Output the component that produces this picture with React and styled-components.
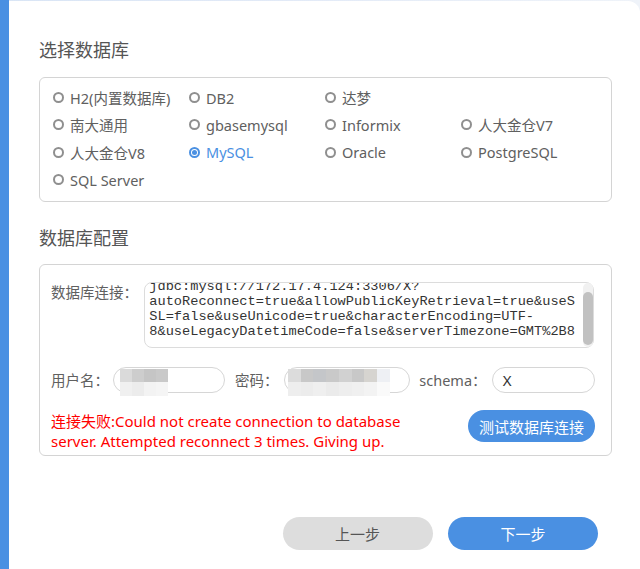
import React, { useEffect, useRef } from 'react';
import styled, { createGlobalStyle } from 'styled-components';

const GlobalStyle = createGlobalStyle`
  html, body { margin: 0; padding: 0; height: 100%; }
  body {
    background: linear-gradient(90deg, #d9e5f5 0%, #e2eaf7 45%, #eff3f9 100%);
    font-family: "Noto Sans", "Noto Sans CJK SC", sans-serif;
    overflow: hidden;
  }
  #root { height: 100%; }
`;

const Page = styled.div`
  display: flex;
  height: 100%;
`;

const SideBar = styled.div`
  width: 9px;
  flex: none;
  background: #4a90e2;
`;

const Card = styled.div`
  flex: 1;
  margin-top: 1px;
  background: #fff;
  border-top-right-radius: 12px;
  padding: 37px 28px 0 30px;
  box-sizing: border-box;
`;

const SectionTitle = styled.h2`
  margin: ${p => p.$top || 0}px 0 ${p => p.$bottom || 15}px;
  font-size: 18px;
  line-height: 24px;
  font-weight: 400;
  color: #555;
`;

const Panel = styled.div`
  border: 1px solid #d4d4d4;
  border-radius: 6px;
  box-sizing: border-box;
`;

const DbGrid = styled(Panel)`
  height: 125px;
  padding: 6px 0 0 13px;
  display: grid;
  grid-template-columns: repeat(4, 136px);
  grid-auto-rows: 27.33px;
  align-content: start;
`;

const Radio = styled.label`
  display: flex;
  align-items: center;
  gap: 6px;
  font-size: 14.5px;
  color: ${p => (p.$on ? '#4a90e2' : '#606060')};
  white-space: nowrap;
  cursor: pointer;
`;

const Dot = styled.span`
  width: 11px;
  height: 11px;
  flex: none;
  box-sizing: border-box;
  border-radius: 50%;
  border: 2px solid ${p => (p.$on ? '#4a90e2' : '#8f8f8f')};
  display: flex;
  align-items: center;
  justify-content: center;
  &::after {
    content: '';
    width: 5px;
    height: 5px;
    border-radius: 50%;
    background: ${p => (p.$on ? '#4a90e2' : 'transparent')};
  }
`;

const ConfigPanel = styled(Panel)`
  height: 192px;
  padding: 17px 16px 0 11px;
  display: flex;
  flex-direction: column;
`;

const Row = styled.div`
  display: flex;
  align-items: ${p => p.$align || 'center'};
  margin-top: ${p => p.$mt || 0}px;
`;

const Label = styled.span`
  width: ${p => p.$w}px;
  margin-left: ${p => p.$ml || 0}px;
  flex: none;
  font-size: 14.5px;
  line-height: 20px;
  color: #606060;
  white-space: nowrap;
`;

const UrlWrap = styled.div`
  position: relative;
  flex: 1;
  height: 66px;
  margin-right: 1px;
`;

const UrlBox = styled.textarea`
  display: block;
  width: 100%;
  height: 100%;
  margin: 0;
  box-sizing: border-box;
  padding: 8px 14px 8px 4px;
  border: 1px solid #dcdcdc;
  border-radius: 8px;
  font-family: "Liberation Mono", monospace;
  font-size: 13.65px;
  line-height: 15px;
  color: #333;
  resize: none;
  outline: none;
  overflow-y: hidden;
  scrollbar-width: none;
`;

const ScrollTrack = styled.div`
  position: absolute;
  top: 1px;
  bottom: 1px;
  right: 1px;
  width: 10px;
  border-radius: 5px;
  background: #f1f1f1;
  pointer-events: none;
`;

const ScrollThumb = styled.div`
  margin-top: 9px;
  height: 53px;
  border-radius: 5px;
  background: #c1c1c1;
`;

const Field = styled.div`
  width: ${p => p.$w}px;
  height: 26px;
  flex: none;
  box-sizing: border-box;
  border: 1px solid #d6d6d6;
  border-radius: 13px;
  padding-left: ${p => p.$pl || 10}px;
  display: flex;
  align-items: center;
  font-size: 15px;
  color: #333;
`;

const Mosaic = styled.div`
  align-self: flex-start;
  margin-top: 1px;
  display: grid;
  grid-template-columns: repeat(${p => p.$cols}, ${p => p.$cell}px);
  grid-template-rows: 13px 14px;
`;

const Cell = styled.span`
  background: ${p => p.$c};
`;

const ErrorText = styled.p`
  margin: 1px 0 0;
  width: 380px;
  font-size: 15px;
  line-height: 20px;
  color: #f00;
`;

const PillButton = styled.button`
  width: ${p => p.$w}px;
  height: ${p => p.$h}px;
  margin-left: ${p => (p.$push ? 'auto' : '0')};
  flex: none;
  border: none;
  border-radius: 999px;
  padding: 0;
  background: ${p => (p.$primary ? '#4a90e2' : '#dddddd')};
  color: ${p => (p.$primary ? '#fff' : '#555')};
  font-family: inherit;
  font-size: 15px;
  cursor: pointer;
`;

const Footer = styled.div`
  display: flex;
  justify-content: flex-end;
  gap: 15.5px;
  margin-top: 61px;
  padding-right: 14px;
`;

const databases = [
  'H2(内置数据库)', 'DB2', '达梦', null,
  '南大通用', 'gbasemysql', 'Informix', '人大金仓V7',
  '人大金仓V8', 'MySQL', 'Oracle', 'PostgreSQL',
  'SQL Server',
];

const jdbcUrl =
  'jdbc:mysql://172.17.4.124:3306/X?autoReconnect=true&allowPublicKeyRetrieval=true&useSSL=false&useUnicode=true&characterEncoding=UTF-8&useLegacyDatetimeCode=false&serverTimezone=GMT%2B8';

const userMosaic = {
  top: ['#dadada', '#cdcdcd', '#c5c5c5', '#c9c9c9'],
  bottom: ['#f0f0f0', '#ececec', '#f3f3f3', '#f5f5f5'],
};

const passMosaic = {
  top: ['#dcdcdc', '#c8c8c8', '#c4c6c9', '#c9c9c9', '#d1d1d1', '#c8c8c8', '#d6d4d0', '#eef0f4'],
  bottom: ['#eeeeee', '#ececec', '#efefef', '#ebebeb', '#eeeeee', '#f0f0f0', '#f3f3f3', '#fafafa'],
};

function Redacted({ data, cell }) {
  return (
    <Mosaic $cols={data.top.length} $cell={cell}>
      {data.top.map((c, i) => <Cell key={'t' + i} $c={c} />)}
      {data.bottom.map((c, i) => <Cell key={'b' + i} $c={c} />)}
    </Mosaic>
  );
}

export default function App() {
  const urlRef = useRef(null);

  useEffect(() => {
    if (urlRef.current) urlRef.current.scrollTop = urlRef.current.scrollHeight;
  }, []);

  return (
    <>
      <GlobalStyle />
      <Page>
        <SideBar />
        <Card>
          <SectionTitle>选择数据库</SectionTitle>
          <DbGrid>
            {databases.map((name, i) =>
              name ? (
                <Radio key={name} $on={name === 'MySQL'}>
                  <Dot $on={name === 'MySQL'} />
                  {name}
                </Radio>
              ) : (
                <span key={'empty' + i} />
              )
            )}
          </DbGrid>

          <SectionTitle $top={24} $bottom={14}>数据库配置</SectionTitle>
          <ConfigPanel>
            <Row $align="flex-start">
              <Label $w={93.3}>数据库连接：</Label>
              <UrlWrap>
                <UrlBox ref={urlRef} readOnly value={jdbcUrl} />
                <ScrollTrack>
                  <ScrollThumb />
                </ScrollTrack>
              </UrlWrap>
            </Row>
            <Row $mt={19}>
              <Label $w={62.3}>用户名：</Label>
              <Field $w={112} $pl={6}>
                <Redacted data={userMosaic} cell={12} />
              </Field>
              <Label $w={49} $ml={9.7}>密码：</Label>
              <Field $w={126} $pl={3}>
                <Redacted data={passMosaic} cell={12.75} />
              </Field>
              <Label $w={72.4} $ml={9.3}>schema：</Label>
              <Field $w={103.3} $pl={10}>X</Field>
            </Row>
            <Row $align="flex-start" $mt={17}>
              <ErrorText>
                连接失败:Could not create connection to database server. Attempted reconnect 3 times. Giving up.
              </ErrorText>
              <PillButton $primary $push $w={127} $h={32}>测试数据库连接</PillButton>
            </Row>
          </ConfigPanel>

          <Footer>
            <PillButton $w={150} $h={33}>上一步</PillButton>
            <PillButton $primary $w={150} $h={33}>下一步</PillButton>
          </Footer>
        </Card>
      </Page>
    </>
  );
}
